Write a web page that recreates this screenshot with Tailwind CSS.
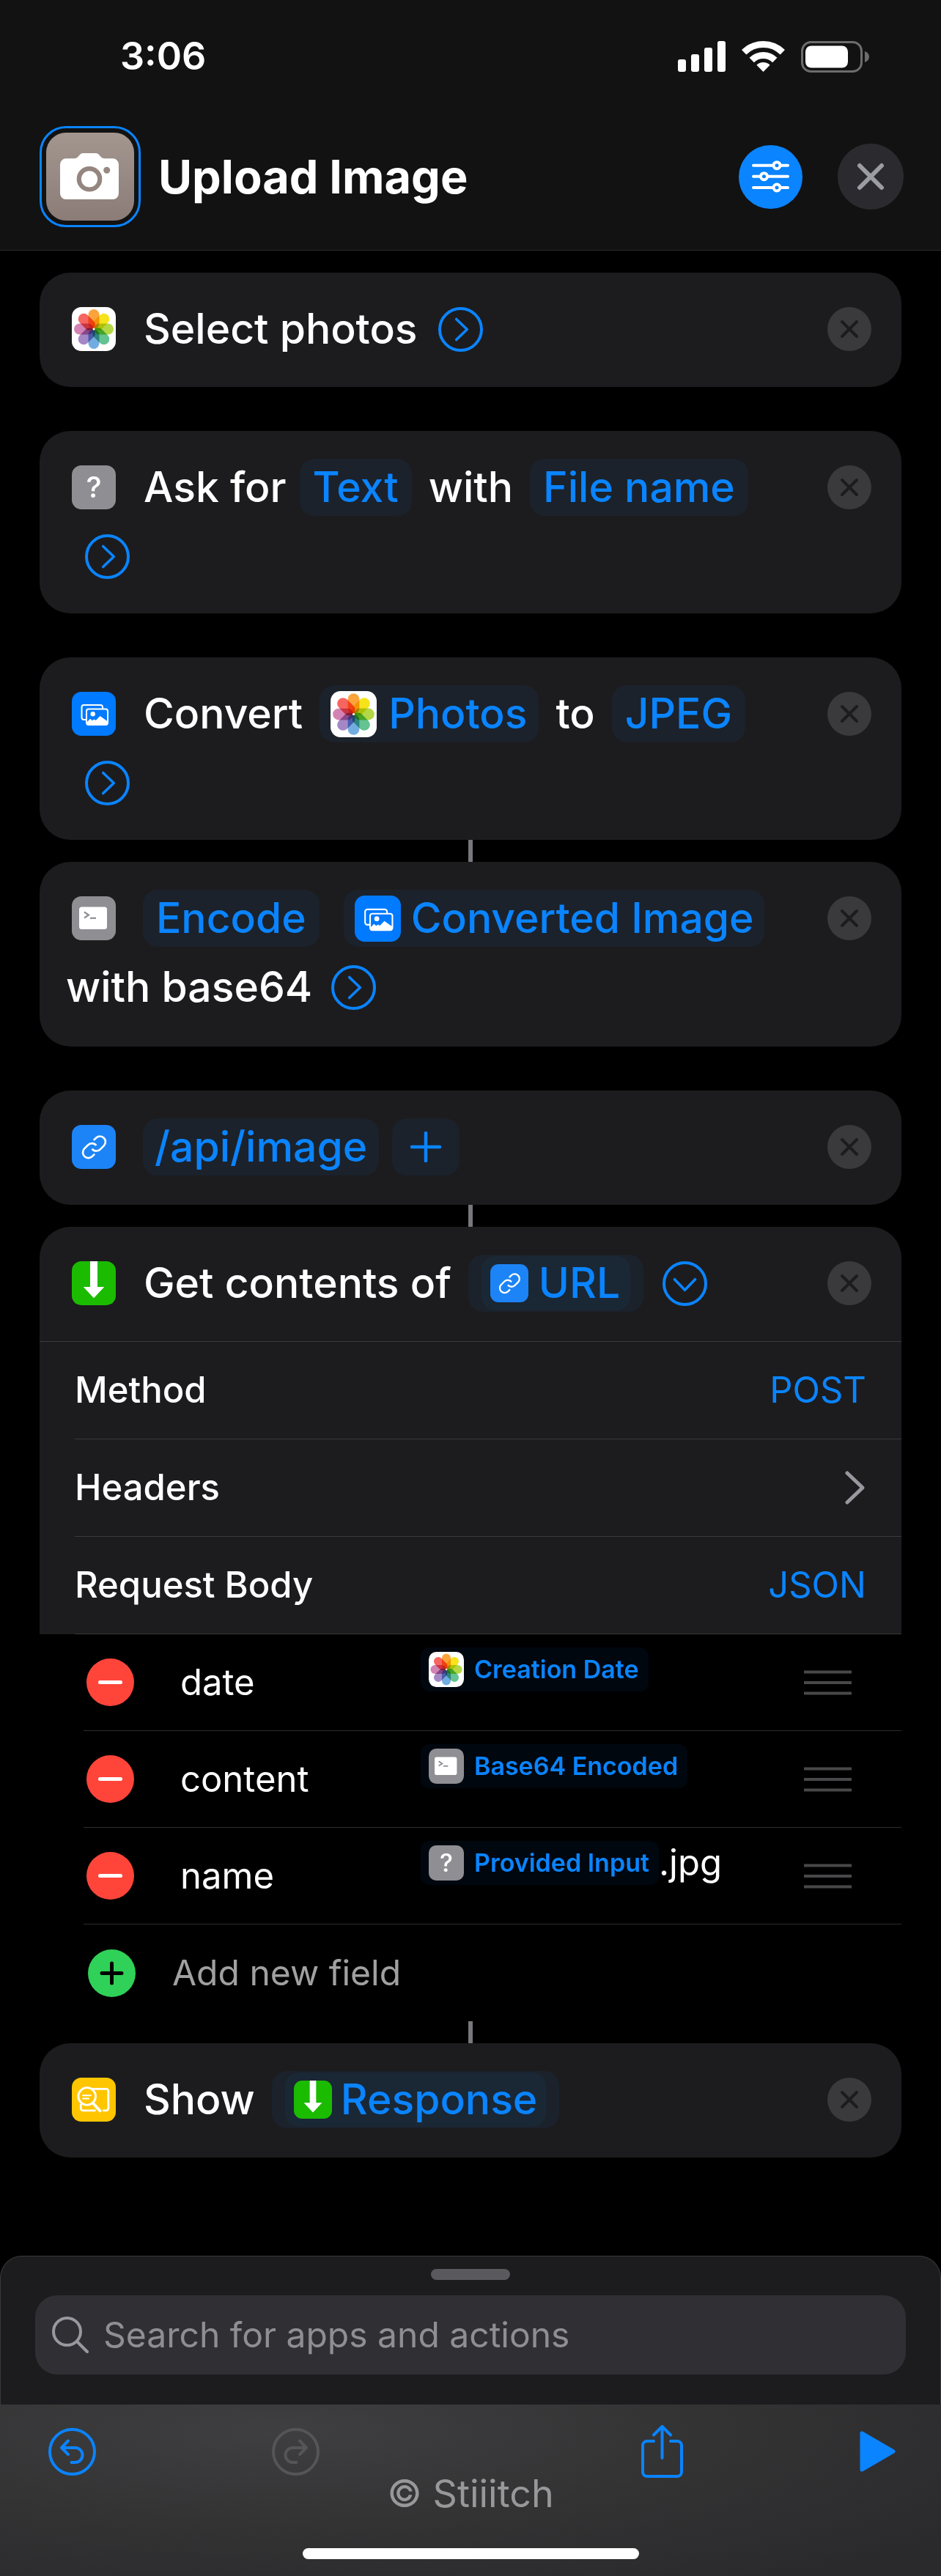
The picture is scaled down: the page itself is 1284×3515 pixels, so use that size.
<!DOCTYPE html>
<html lang="en">
<head>
<meta charset="utf-8">
<meta name="viewport" content="width=device-width, initial-scale=1">
<title>Upload Image</title>
<script src="https://cdn.jsdelivr.net/npm/@tailwindcss/browser@4"></script>
</head>
<body class="min-h-screen bg-black font-['Inter','Liberation_Sans',sans-serif] text-white">

<!-- Shared icons -->
<svg class="hidden" aria-hidden="true">
  <defs>
    <symbol id="i-photos" viewBox="0 0 60 60">
      <rect width="60" height="60" rx="13" fill="#fff"/>
      <g class="isolate">
        <rect x="22.5" y="3" width="15" height="26.500" rx="7.500" fill="#fba43b" class="mix-blend-multiply"/>
        <rect x="22.5" y="3" width="15" height="26.500" rx="7.500" fill="#f6e31a" class="mix-blend-multiply" transform="rotate(45 30 30)"/>
        <rect x="22.5" y="3" width="15" height="26.500" rx="7.500" fill="#b4d845" class="mix-blend-multiply" transform="rotate(90 30 30)"/>
        <rect x="22.5" y="3" width="15" height="26.500" rx="7.500" fill="#63c391" class="mix-blend-multiply" transform="rotate(135 30 30)"/>
        <rect x="22.5" y="3" width="15" height="26.500" rx="7.500" fill="#71ade0" class="mix-blend-multiply" transform="rotate(180 30 30)"/>
        <rect x="22.5" y="3" width="15" height="26.500" rx="7.500" fill="#a488c6" class="mix-blend-multiply" transform="rotate(225 30 30)"/>
        <rect x="22.5" y="3" width="15" height="26.500" rx="7.500" fill="#d383b3" class="mix-blend-multiply" transform="rotate(270 30 30)"/>
        <rect x="22.5" y="3" width="15" height="26.500" rx="7.500" fill="#f6655f" class="mix-blend-multiply" transform="rotate(315 30 30)"/>
      </g>
      <circle cx="30" cy="30" r="1.500" fill="#fff"/>
    </symbol>
    <symbol id="i-images" viewBox="0 0 60 60">
      <rect width="60" height="60" rx="13" fill="#007aff"/>
      <path d="M20 38H16.500a3 3 0 0 1-3-3V21a3 3 0 0 1 3-3H39a3 3 0 0 1 3 3v2" fill="none" stroke="#fff" stroke-width="2"/>
      <rect x="20" y="23.500" width="29" height="21.500" rx="3" fill="#007aff" stroke="#fff" stroke-width="2"/>
      <circle cx="28.700" cy="30.200" r="3.200" fill="#fff"/>
      <path d="M20 42l5-5.200 3 2.400 2.500-1.700 2.300 1.500 5.700-6 10.500 7.500V43a2.500 2.500 0 0 1-2.500 2.500h-24A2.500 2.500 0 0 1 20 43z" fill="#fff"/>
    </symbol>
    <symbol id="i-terminal" viewBox="0 0 60 60">
      <rect width="60" height="60" rx="13" fill="#8e8e93"/>
      <rect x="10" y="14.500" width="38" height="30.500" rx="3.500" fill="#fff"/>
      <path d="M17 21.500l6 4-6 4" fill="none" stroke="#8e8e93" stroke-width="2.200"/>
      <path d="M25 29.800h8" stroke="#8e8e93" stroke-width="2.200"/>
    </symbol>
    <symbol id="i-link" viewBox="0 0 60 60">
      <rect width="60" height="60" rx="13" fill="#1c84f6"/>
      <g transform="translate(10.800 10.600) scale(1.640)" fill="none" stroke="#fff" stroke-width="1.600">
        <path d="M10.200 13.400a4.600 4.600 0 0 0 7 .3l3-3a4.600 4.600 0 0 0-6.500-6.500l-2.100 2.100"/>
        <path d="M13.800 10.600a4.600 4.600 0 0 0-7-.3l-3 3a4.600 4.600 0 0 0 6.500 6.500l2.100-2.100"/>
      </g>
    </symbol>
    <symbol id="i-download" viewBox="0 0 60 60">
      <rect width="60" height="60" rx="13" fill="#1bbb00"/>
      <path d="M25 0h10v35h9.300L30 50.300 15.700 35H25z" fill="#fff"/>
    </symbol>
    <symbol id="i-look" viewBox="0 0 60 60">
      <rect width="60" height="60" rx="13" fill="#ffc600"/>
      <g fill="none" stroke="#fff" stroke-width="2.800" stroke-linecap="round">
        <path d="M28 15.300H47a2.800 2.800 0 0 1 2.800 2.800V42a2.800 2.800 0 0 1-2.800 2.800h-4M12.300 37v5a2.800 2.800 0 0 0 2.800 2.800H31.500"/>
        <circle cx="20.700" cy="25.500" r="11.800" fill="#ffc600"/>
        <path d="M15 24.200h11M15 28.400h8" stroke-width="2"/>
        <path d="M29 35l9.500 10.300" stroke-width="4"/>
      </g>
    </symbol>
    <symbol id="i-more" viewBox="0 0 61 61">
      <g fill="none" stroke="#0a84ff" stroke-linecap="round" stroke-linejoin="round">
        <circle cx="30.500" cy="30.500" r="28.500" stroke-width="4"/>
        <path d="M24.700 16.500l14.600 14-14.600 14" stroke-width="3.600"/>
      </g>
    </symbol>
    <symbol id="i-remove" viewBox="0 0 60 60">
      <circle cx="30" cy="30" r="30" fill="#3a3a3d"/>
      <path d="M20 20l20 20M40 20l-20 20" stroke="#1c1c1e" stroke-width="4" stroke-linecap="round"/>
    </symbol>
    <symbol id="i-minus" viewBox="0 0 65 65">
      <circle cx="32.500" cy="32.500" r="32.500" fill="#ff453a"/>
      <path d="M18.500 32.500h28" stroke="#fff" stroke-width="5" stroke-linecap="round"/>
    </symbol>
    <symbol id="i-grip" viewBox="0 0 65 34">
      <path d="M0 2.500h65M0 17h65M0 31.500h65" stroke="#48484a" stroke-width="4"/>
    </symbol>
  </defs>
</svg>

<header class="border-b border-[#2a2a2b] bg-[#121212]">
  <div class="flex h-[154px] items-center justify-between pl-[164px] pr-[97px]">
    <time class="text-[52px] leading-[60px] font-semibold">3:06</time>
    <div class="flex items-center gap-[22px]">
      <svg class="h-[42px] w-[65px]" viewBox="0 0 65 42" fill="#fff" aria-label="Signal"><rect y="25" width="11" height="17" rx="3"/><rect x="18" y="18" width="11" height="24" rx="3"/><rect x="36" y="9" width="11" height="33" rx="3"/><rect x="54" width="11" height="42" rx="3"/></svg>
      <svg class="h-[42px] w-[59px]" viewBox="0 0 59 42" fill="none" stroke="#fff" stroke-width="9" aria-label="Wi-Fi"><path d="M3.200 15.300a37.500 37.500 0 0 1 52.600 0M13.700 26a22.500 22.500 0 0 1 31.600 0"/><path d="M29.500 42l-9.100-9.300a13 13 0 0 1 18.200 0z" fill="#fff" stroke="none"/></svg>
      <svg class="h-[43px] w-[94px]" viewBox="0 0 94 43" aria-label="Battery"><rect x="1.500" y="1.500" width="81" height="40" rx="12" fill="none" stroke="#6c6c6c" stroke-width="3"/><rect x="6" y="6.500" width="58" height="30" rx="8" fill="#fff"/><path d="M87 14c4 1.500 6 4.200 6 7.500s-2 6-6 7.500z" fill="#6c6c6c"/></svg>
    </div>
  </div>
  <div class="flex items-center pt-[18px] pr-[51px] pb-[31px] pl-[54px]">
    <button class="flex size-[138px] shrink-0 items-center justify-center rounded-[36px] border-3 border-[#0a84ff]" aria-label="Shortcut icon">
      <svg class="size-[120px]" viewBox="0 0 120 120"><defs><linearGradient id="taupe" x1="0" y1="0" x2="0" y2="1"><stop offset="0" stop-color="#a3968f"/><stop offset="1" stop-color="#8b7c77"/></linearGradient></defs><rect width="120" height="120" rx="27" fill="url(#taupe)"/><path d="M27 35.300H38c3 0 4-.8 6-3l2-2.200c1.500-1.700 3-2.100 5-2.100H67c2 0 3.500.4 5 2.100l2 2.200c2 2.200 3 3 6 3H91a8 8 0 0 1 8 8V83a8 8 0 0 1-8 8H27a8 8 0 0 1-8-8V43.300a8 8 0 0 1 8-8z" fill="#fff"/><circle cx="59" cy="63.300" r="14.200" fill="#fff" stroke="#94867f" stroke-width="6.200"/><circle cx="82.700" cy="51.300" r="4.500" fill="#978982"/></svg>
    </button>
    <h1 class="ml-[24px] flex-1 text-[63px] leading-[76px] font-bold">Upload Image</h1>
    <button class="mr-[48px] shrink-0" aria-label="Settings">
      <svg class="size-[87px]" viewBox="0 0 87 87"><circle cx="43.500" cy="43.500" r="43.500" fill="#0a84ff"/><g fill="#0a84ff" stroke="#fff" stroke-width="4" stroke-linecap="round"><path d="M20 27.700h47M20 42.700h47M20 58h47"/><circle cx="52" cy="27.700" r="4.500"/><circle cx="34.500" cy="42.700" r="4.500"/><circle cx="52" cy="58" r="4.500"/></g></svg>
    </button>
    <button class="shrink-0" aria-label="Close">
      <svg class="size-[90px]" viewBox="0 0 90 90"><circle cx="45" cy="45" r="45" fill="#2b2b2f"/><path d="M30 30l30 30M60 30l-30 30" stroke="#9c9ca3" stroke-width="6" stroke-linecap="round"/></svg>
    </button>
  </div>
</header>

<main class="flex flex-col px-[54px] pt-[30px] pb-[134px] text-[57px] leading-[78px] font-medium">

  <section class="flex rounded-[42px] bg-[#1c1c1e] pt-[30px] pr-[41px] pb-8">
    <div class="flex h-[94px] flex-1 items-center pl-11">
      <svg class="mr-[38px] size-[60px]"><use href="#i-photos"/></svg>
      <span>Select photos</span>
      <button class="ml-[28px]" aria-label="Show more"><svg class="size-[61px]"><use href="#i-more"/></svg></button>
    </div>
    <button class="flex h-[94px] items-center" aria-label="Remove action"><svg class="size-[60px]"><use href="#i-remove"/></svg></button>
  </section>

  <section class="mt-[60px] flex rounded-[42px] bg-[#1c1c1e] pt-[30px] pr-[41px] pb-[31px]">
    <div class="flex-1">
      <div class="flex h-[94px] items-center pl-11">
        <span class="mr-[38px] flex size-[60px] items-center justify-center rounded-[13px] bg-[#8e8e93] text-[40px] leading-[60px]">?</span>
        <span>Ask for</span>
        <button class="ml-[18px] rounded-[20px] bg-[#1b222b] px-[18px] text-[#0a84ff]">Text</button>
        <span class="ml-[23px]">with</span>
        <button class="ml-[23px] rounded-[20px] bg-[#1b222b] px-[18px] text-[#0a84ff]">File name</button>
      </div>
      <div class="flex h-[94px] items-center pl-[62px]">
        <button aria-label="Show more"><svg class="size-[61px]"><use href="#i-more"/></svg></button>
      </div>
    </div>
    <button class="flex h-[94px] items-center" aria-label="Remove action"><svg class="size-[60px]"><use href="#i-remove"/></svg></button>
  </section>

  <section class="mt-[60px] flex rounded-[42px] bg-[#1c1c1e] pt-[30px] pr-[41px] pb-[31px]">
    <div class="flex-1">
      <div class="flex h-[94px] items-center pl-11">
        <svg class="mr-[38px] size-[60px]"><use href="#i-images"/></svg>
        <span>Convert</span>
        <button class="ml-[23px] flex items-center gap-[16px] rounded-[20px] bg-[#1b222b] pr-[16px] pl-[15px] text-[#0a84ff]"><svg class="size-[63px]"><use href="#i-photos"/></svg>Photos</button>
        <span class="ml-[23px]">to</span>
        <button class="ml-[23px] rounded-[20px] bg-[#1b222b] px-[18px] text-[#0a84ff]">JPEG</button>
      </div>
      <div class="flex h-[94px] items-center pl-[62px]">
        <button aria-label="Show more"><svg class="size-[61px]"><use href="#i-more"/></svg></button>
      </div>
    </div>
    <button class="flex h-[94px] items-center" aria-label="Remove action"><svg class="size-[60px]"><use href="#i-remove"/></svg></button>
  </section>

  <div class="h-[30px] w-[6px] self-center bg-[#77777c]"></div>

  <section class="flex rounded-[42px] bg-[#1c1c1e] pt-[30px] pr-[41px] pb-[34px]">
    <div class="flex-1">
      <div class="flex h-[94px] items-center pl-11">
        <svg class="mr-[37px] size-[60px]"><use href="#i-terminal"/></svg>
        <button class="rounded-[20px] bg-[#1b222b] px-[18px] text-[#0a84ff]">Encode</button>
        <button class="ml-[33px] flex items-center gap-[14px] rounded-[20px] bg-[#1b222b] pr-[14px] pl-[15px] whitespace-nowrap text-[#0a84ff]"><svg class="size-[63px]"><use href="#i-images"/></svg>Converted Image</button>
      </div>
      <div class="flex h-[94px] items-center pl-[36px]">
        <span>with base64</span>
        <button class="ml-[26px]" aria-label="Show more"><svg class="size-[61px]"><use href="#i-more"/></svg></button>
      </div>
    </div>
    <button class="flex h-[94px] items-center" aria-label="Remove action"><svg class="size-[60px]"><use href="#i-remove"/></svg></button>
  </section>

  <section class="mt-[60px] flex rounded-[42px] bg-[#1c1c1e] pt-[30px] pr-[41px] pb-8">
    <div class="flex h-[94px] flex-1 items-center pl-11">
      <svg class="mr-[37px] size-[60px]"><use href="#i-link"/></svg>
      <button class="rounded-[20px] bg-[#1b222b] px-[16px] text-[#0a84ff]">/api/image</button>
      <button class="ml-[18px] flex h-[78px] w-[92px] items-center justify-center rounded-[20px] bg-[#1b222b]" aria-label="Add URL"><svg class="size-[42px]" viewBox="0 0 42 42"><path d="M21 2v38M2 21h38" stroke="#0a84ff" stroke-width="4.500" stroke-linecap="round"/></svg></button>
    </div>
    <button class="flex h-[94px] items-center" aria-label="Remove action"><svg class="size-[60px]"><use href="#i-remove"/></svg></button>
  </section>

  <div class="h-[30px] w-[6px] self-center bg-[#77777c]"></div>

  <section>
    <div class="flex rounded-t-[42px] bg-[#1c1c1e] pt-[30px] pr-[41px] pb-8">
      <div class="flex h-[94px] flex-1 items-center pl-11">
        <svg class="mr-[38px] size-[60px]"><use href="#i-download"/></svg>
        <span>Get contents of</span>
        <button class="ml-[23px] rounded-[20px] bg-[#1b222b] px-[18px] py-[2px] text-[#0a84ff]"><span class="flex h-[74px] items-center gap-[14px] rounded-[18px] bg-[#1a2735] pr-[14px] pl-[12px]"><svg class="size-[52px]"><use href="#i-link"/></svg>URL</span></button>
        <button class="ml-[26px]" aria-label="Show less"><svg class="size-[61px] rotate-90"><use href="#i-more"/></svg></button>
      </div>
      <button class="flex h-[94px] items-center" aria-label="Remove action"><svg class="size-[60px]"><use href="#i-remove"/></svg></button>
    </div>
    <div class="border-t border-[#3a3a3c] bg-[#1c1c1e] pl-[48px] text-[49px] leading-[60px]">
      <div class="flex h-[133px] items-center justify-between border-b border-[#3a3a3c] pr-[48px]">
        <label for="method">Method</label>
        <select id="method" class="appearance-none bg-transparent text-right font-normal text-[#0a84ff]"><option>POST</option></select>
      </div>
      <button class="flex h-[133px] w-full items-center justify-between border-b border-[#3a3a3c] pr-[50px]">
        <span>Headers</span>
        <svg class="h-[46px] w-[27px]" viewBox="0 0 27 46"><path d="M3 3l21 20L3 43" fill="none" stroke="#98989e" stroke-width="5" stroke-linecap="round" stroke-linejoin="round"/></svg>
      </button>
      <div class="flex h-[133px] items-center justify-between border-b border-[#3a3a3c] pr-[48px]">
        <label for="body">Request Body</label>
        <select id="body" class="appearance-none bg-transparent text-right font-normal text-[#0a84ff]"><option>JSON</option></select>
      </div>
    </div>
    <ul class="pl-[60px] text-[49px] leading-[60px] font-normal">
      <li class="flex h-[132px] items-center border-b border-[#2c2c2e] pr-[68px] pl-[4px]">
        <button class="mr-[63px]" aria-label="Delete date"><svg class="size-[65px]"><use href="#i-minus"/></svg></button>
        <input class="w-[328px] bg-transparent" aria-label="Key" value="date">
        <div class="mt-[18px] flex flex-1 items-center self-start">
          <button class="flex h-[60px] items-center gap-[14px] rounded-[12px] bg-[#00070f] pr-[13px] pl-[11px] text-[34px] font-semibold text-[#0a84ff]"><svg class="size-[48px]"><use href="#i-photos"/></svg>Creation Date</button>
        </div>
        <svg class="h-[34px] w-[65px]" aria-label="Reorder"><use href="#i-grip"/></svg>
      </li>
      <li class="flex h-[132px] items-center border-b border-[#2c2c2e] pr-[68px] pl-[4px]">
        <button class="mr-[63px]" aria-label="Delete content"><svg class="size-[65px]"><use href="#i-minus"/></svg></button>
        <input class="w-[328px] bg-transparent" aria-label="Key" value="content">
        <div class="mt-[18px] flex flex-1 items-center self-start">
          <button class="flex h-[60px] items-center gap-[14px] rounded-[12px] bg-[#00070f] pr-[13px] pl-[11px] text-[34px] font-semibold text-[#0a84ff]"><svg class="size-[48px]"><use href="#i-terminal"/></svg>Base64 Encoded</button>
        </div>
        <svg class="h-[34px] w-[65px]" aria-label="Reorder"><use href="#i-grip"/></svg>
      </li>
      <li class="flex h-[132px] items-center border-b border-[#2c2c2e] pr-[68px] pl-[4px]">
        <button class="mr-[63px]" aria-label="Delete name"><svg class="size-[65px]"><use href="#i-minus"/></svg></button>
        <input class="w-[328px] bg-transparent" aria-label="Key" value="name">
        <div class="mt-[18px] flex flex-1 items-center self-start">
          <button class="flex h-[60px] items-center gap-[14px] rounded-[12px] bg-[#00070f] pr-[13px] pl-[11px] text-[34px] font-semibold text-[#0a84ff]"><span class="flex size-[48px] items-center justify-center rounded-[10px] bg-[#8e8e93] font-medium text-white">?</span>Provided Input</button>
          <span>.jpg</span>
        </div>
        <svg class="h-[34px] w-[65px]" aria-label="Reorder"><use href="#i-grip"/></svg>
      </li>
      <li>
        <button class="flex h-[132px] w-full items-center gap-[50px] pl-[6px] text-[48px] text-[#a0a0a0]">
          <svg class="size-[65px]" viewBox="0 0 65 65"><circle cx="32.500" cy="32.500" r="32.500" fill="#30d158"/><path d="M32.500 19v27M19 32.500h27" stroke="#000" stroke-width="5" stroke-linecap="round"/></svg>
          Add new field
        </button>
      </li>
    </ul>
  </section>

  <div class="h-[30px] w-[6px] self-center bg-[#77777c]"></div>

  <section class="flex rounded-[42px] bg-[#1c1c1e] pt-[30px] pr-[41px] pb-8">
    <div class="flex h-[94px] flex-1 items-center pl-11">
      <svg class="mr-[38px] size-[60px]"><use href="#i-look"/></svg>
      <span>Show</span>
      <button class="ml-[23px] rounded-[20px] bg-[#1b222b] px-[18px] py-[2px] text-[#0a84ff]"><span class="flex h-[74px] items-center gap-[12px] rounded-[18px] bg-[#1a2735] pr-[12px] pl-[12px]"><svg class="size-[52px]"><use href="#i-download"/></svg>Response</span></button>
    </div>
    <button class="flex h-[94px] items-center" aria-label="Remove action"><svg class="size-[60px]"><use href="#i-remove"/></svg></button>
  </section>
</main>

<footer>
  <div class="flex flex-col rounded-t-[30px] border border-b-0 border-[#3a3a3c] bg-[#1c1c1e] px-[47px] pt-[17px] pb-[41px]">
    <div class="h-[15px] w-[108px] self-center rounded-full bg-[#5a5a5e]"></div>
    <label class="mt-[21px] flex h-[108px] items-center gap-[20px] rounded-[30px] bg-[#303034] px-[23px]">
      <svg class="size-[50px] shrink-0" viewBox="0 0 50 50" fill="none" stroke="#98989f" stroke-width="4" stroke-linecap="round" aria-hidden="true"><circle cx="20.500" cy="20.500" r="18.500"/><path d="M34 34l14 14"/></svg>
      <input type="search" class="min-w-0 flex-1 bg-transparent text-[48px] leading-[60px] placeholder-[#8e8e93]" aria-label="Search" placeholder="Search for apps and actions">
    </label>
  </div>
  <div class="flex flex-col items-center bg-[radial-gradient(ellipse_at_30%_15%,#3f3f41,#333334_45%,#2a2a2c_90%)] pt-[28px] pb-[23px]">
    <div class="flex w-full justify-between pr-[62px] pl-[66px]">
      <div class="flex w-[32%] items-center justify-between">
        <button aria-label="Undo"><svg class="size-[65px]" viewBox="0 0 65 65" fill="none" stroke="#0a84ff" stroke-width="4" stroke-linecap="round" stroke-linejoin="round"><circle cx="32.500" cy="32.500" r="30.500"/><path d="M27 17.500l-9 9.500 9 9M18.500 27h18a10 10 0 0 1 0 20h-5"/></svg></button>
        <button disabled aria-label="Redo"><svg class="size-[65px]" viewBox="0 0 65 65" fill="none" stroke="#555557" stroke-width="4" stroke-linecap="round" stroke-linejoin="round"><circle cx="32.500" cy="32.500" r="30.500"/><path d="M38 17.500l9 9.500-9 9M46.500 27h-18a10 10 0 0 0 0 20h5"/></svg></button>
      </div>
      <div class="flex w-[30%] items-center justify-between">
        <button aria-label="Share"><svg class="h-[72px] w-[57px]" viewBox="0 0 57 72" fill="none" stroke="#0a84ff" stroke-width="4" stroke-linecap="round" stroke-linejoin="round"><path d="M17 22H8a6 6 0 0 0-6 6v36a6 6 0 0 0 6 6h41a6 6 0 0 0 6-6V28a6 6 0 0 0-6-6h-9M28.500 45V2.500M17 13.500l11.500-11.500L40 13.500"/></svg></button>
        <button aria-label="Run"><svg class="h-[56px] w-[49px]" viewBox="0 0 49 56"><path d="M3 3v50l43-25z" fill="#0a84ff" stroke="#0a84ff" stroke-width="5" stroke-linejoin="round"/></svg></button>
      </div>
    </div>
    <p class="text-[52px] leading-[44px] text-[#98989a]">© Stiiitch</p>
    <div class="mt-[52px] h-[15px] w-[459px] rounded-full bg-white"></div>
  </div>
</footer>
</body>
</html>
